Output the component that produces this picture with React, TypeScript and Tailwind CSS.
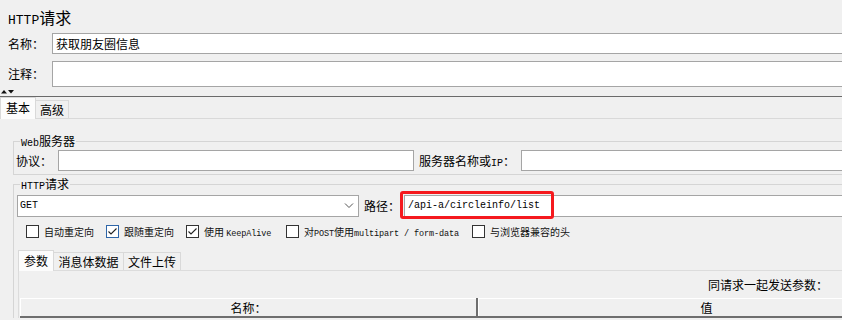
import type { ReactNode } from 'react'

// SimSun-like rendering: CJK in Noto, ASCII in a mono face
function M({ children, className = 'text-[10px]' }: { children: ReactNode; className?: string }) {
  return <span className={`font-['Liberation_Mono',monospace] leading-none ${className}`}>{children}</span>
}

function Check({ checked, blue }: { checked?: boolean; blue?: boolean }) {
  return (
    <div
      className={`w-[13px] h-[13px] shrink-0 bg-white border ${blue ? 'border-[#2f66a8]' : 'border-[#333333]'}`}
    >
      {checked && (
        <svg width="11" height="11" viewBox="0 0 11 11">
          <polyline points="1.5,5.5 4,8 9.5,2.5" fill="none" stroke="#222" strokeWidth="1.1" />
        </svg>
      )}
    </div>
  )
}

function CheckItem({ width, checked, blue, children }: { width: string; checked?: boolean; blue?: boolean; children: ReactNode }) {
  return (
    <div className={`flex items-center gap-[5px] ${width}`}>
      <Check checked={checked} blue={blue} />
      <span className="text-[10px] leading-[13px] h-[13px] whitespace-nowrap text-[#111]">{children}</span>
    </div>
  )
}

const cm = 'text-[8.5px] tracking-[-0.1px]'

export default function App() {
  return (
    <div className="relative w-[842px] h-[320px] overflow-hidden bg-[#f0f0f0] text-black font-['Noto_Sans_CJK_SC',sans-serif]">
      {/* title */}
      <div className="h-[33px] pl-2 pt-[7px] text-[16px] leading-[20px]">
        <M className="text-[13px]">HTTP</M>请求
      </div>

      {/* name / comment */}
      <div className="flex items-center h-[21px]">
        <div className="w-[52px] pl-2 text-[12px] leading-[14px]">名称：</div>
        <div className="flex-1 h-[21px] bg-white border border-[#a5a5a5] border-r-0 pl-[3px] text-[12px] leading-[19px]">
          获取朋友圈信息
        </div>
      </div>
      <div className="flex items-center h-[26px] mt-[7px]">
        <div className="w-[52px] pl-2 text-[12px] leading-[14px]">注释：</div>
        <div className="flex-1 h-[26px] bg-white border border-[#a5a5a5] border-r-0" />
      </div>

      {/* splitter */}
      <div className="h-[10px] border-b border-[#6a6a6a] flex items-end pl-[1px] pb-[2px]">
        <svg width="13" height="5" viewBox="0 0 13 5">
          <polygon points="0,4.5 3,1 6,4.5" fill="#111" />
          <polygon points="7,1 13,1 10,4.5" fill="#111" />
        </svg>
      </div>

      {/* main tabs */}
      <div className="flex items-end h-[21px]">
        <div className="w-[36px] h-[22px] -mb-[1px] bg-[#fcfcfc] border border-b-0 border-[#d9d9d9] text-[12px] leading-[20px] text-center relative z-10">
          基本
        </div>
        <div className="w-[33px] h-[18px] border border-l-0 border-b-0 border-[#d9d9d9] text-[12px] leading-[18px] text-center">
          高级
        </div>
      </div>

      {/* content */}
      <div className="border-t border-[#d9d9d9] pt-[15px]">
        <fieldset className="min-w-0 ml-[13px] border border-r-0 border-[#d5d5d5] pb-[3px]">
          <legend className="ml-[6px] px-[1px] h-[14px] text-[12px] leading-[14px]">
            <M>Web</M>服务器
          </legend>
          <div className="flex items-center mt-[2px] h-[21px] pl-[2px]">
            <div className="w-[42px] text-[12px] leading-[14px]">协议：</div>
            <div className="w-[356px] h-[21px] bg-white border border-[#a5a5a5]" />
            <div className="w-[102px] ml-[5px] h-[14px] text-[12px] leading-[14px] whitespace-nowrap">
              服务器名称或<M>IP</M>：
            </div>
            <div className="flex-1 h-[21px] bg-white border border-[#a5a5a5] border-r-0" />
          </div>
        </fieldset>

        <fieldset className="min-w-0 ml-[13px] mt-[2px] border border-r-0 border-b-0 border-[#d5d5d5]">
          <legend className="ml-[6px] px-[1px] h-[14px] text-[12px] leading-[14px]">
            <M>HTTP</M>请求
          </legend>

          <div className="flex items-center mt-[4px] h-[22px] pl-[3px]">
            <div className="w-[342px] h-[22px] bg-white border border-[#a5a5a5] flex items-center justify-between pl-[2px] pr-[4px]">
              <M>GET</M>
              <svg width="10" height="6" viewBox="0 0 10 6">
                <polyline points="1,0.5 5,4.5 9,0.5" fill="none" stroke="#555" strokeWidth="1" />
              </svg>
            </div>
            <div className="w-[40px] ml-[5px] text-[12px] leading-[14px]">路径：</div>
            <div className="flex-1 h-[22px] bg-white border border-[#a5a5a5] border-r-0 pl-[3px] flex items-center">
              <M>/api-a/circleinfo/list</M>
            </div>
          </div>

          <div className="flex items-center mt-[8px] h-[13px] pl-[12px]">
            <CheckItem width="w-[80px]">自动重定向</CheckItem>
            <CheckItem width="w-[80px]" checked blue>跟随重定向</CheckItem>
            <CheckItem width="w-[100px]" checked>
              使用 <M className={cm}>KeepAlive</M>
            </CheckItem>
            <CheckItem width="w-[186px]">
              对<M className={cm}>POST</M>使用<M className={cm}>multipart / form-data</M>
            </CheckItem>
            <CheckItem width="w-[110px]">与浏览器兼容的头</CheckItem>
          </div>

          {/* sub tabs */}
          <div className="flex items-end h-[20px] mt-[12px] ml-[4px]">
            <div className="w-[36px] h-[21px] -mb-[1px] bg-[#fcfcfc] border border-b-0 border-[#d9d9d9] text-[12px] leading-[20px] text-center relative z-10">
              参数
            </div>
            <div className="w-[70px] h-[18px] border border-l-0 border-b-0 border-[#d9d9d9] text-[12px] leading-[18px] text-center">
              消息体数据
            </div>
            <div className="w-[57px] h-[18px] border border-l-0 border-b-0 border-[#d9d9d9] text-[12px] leading-[18px] text-center">
              文件上传
            </div>
          </div>
          <div className="ml-[4px] border-t border-l border-[#dcdcdc] bg-[#f0f0f0] overflow-hidden">
            <div className="h-[27px] pr-[14px] flex items-center justify-end text-[12px] leading-[14px]">
              同请求一起发送参数：
            </div>
            <div className="flex ml-[1px] h-[20px] border-b-2 border-[#6e6e6e]">
              <div className="w-[456px] shrink-0 border-t border-l border-white text-[12px] leading-[18px] text-center">
                名称：
              </div>
              <div className="w-[2px] shrink-0 bg-[#6e6e6e]" />
              <div className="w-[456px] shrink-0 border-t border-l border-white text-[12px] leading-[18px] text-center">
                值
              </div>
            </div>
          </div>
        </fieldset>
      </div>

      {/* annotation box */}
      <div className="absolute left-[400px] top-[191px] w-[154px] h-[28px] border-[3px] border-[#f5191e] rounded-[3px]" />
    </div>
  )
}
